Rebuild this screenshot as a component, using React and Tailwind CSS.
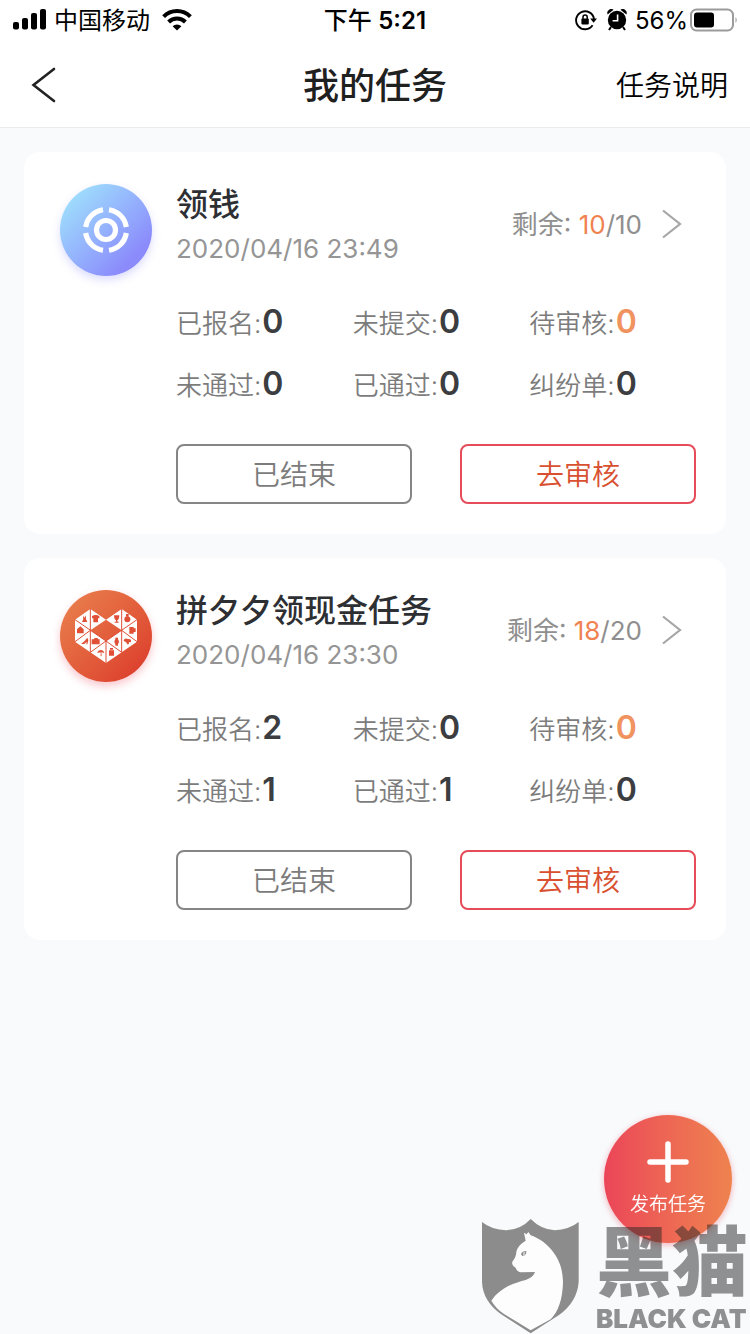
const tasks = [
  {
    id: 1, icon: 'target', title: '领钱', date: '2020/04/16 23:49', left: 10, total: 10,
    stats: [['已报名', 0], ['未提交', 0], ['待审核', 0, true], ['未通过', 0], ['已通过', 0], ['纠纷单', 0]],
  },
  {
    id: 2, icon: 'heart', title: '拼夕夕领现金任务', date: '2020/04/16 23:30', left: 18, total: 20,
    stats: [['已报名', 2], ['未提交', 0], ['待审核', 0, true], ['未通过', 1], ['已通过', 1], ['纠纷单', 0]],
  },
];

function StatusBar() {
  return (
    <div className="grid h-10 grid-cols-[1fr_auto_1fr] items-center px-3 text-[24px] leading-9 text-black">
      <div className="flex items-center gap-2">
        <svg className="h-[22px] w-[34px]" viewBox="0 0 34 22">
          <rect x="1" y="13" width="6" height="7.500" rx="2" />
          <rect x="10" y="9" width="6" height="11.500" rx="2" />
          <rect x="19" y="4" width="6" height="16.500" rx="2" />
          <rect x="28" y="0" width="6" height="20.500" rx="2" />
        </svg>
        <span className="pt-[2px]">中国移动</span>
        <svg className="ml-1 h-[22px] w-[30px]" viewBox="0 0 30 22" fill="none" stroke="#000" strokeWidth="4">
          <path d="M1.600 7.600A19 19 0 0 1 28.400 7.600" />
          <path d="M6.600 13A12 12 0 0 1 23.400 13" />
          <path d="M15 21.500L10.600 17.200A6.400 6.400 0 0 1 19.400 17.200Z" fill="#000" stroke="none" />
        </svg>
      </div>
      <div className="pt-[2px] font-medium">下午 <span className="font-semibold">5:21</span></div>
      <div className="flex items-center justify-end">
        <svg className="mr-[10px] h-[22px] w-[22px]" viewBox="0 0 22 22">
          <path d="M17.600 16.200A9 9 0 1 1 19 10" fill="none" stroke="#000" strokeWidth="1.9" />
          <path d="M15.200 9.400H22L18.600 13.800Z" />
          <rect x="6.400" y="9.600" width="7.400" height="5.800" rx=".8" />
          <path d="M8 10V8.200a2.100 2.100 0 0 1 4.200 0V10" fill="none" stroke="#000" strokeWidth="1.5" />
        </svg>
        <svg className="mr-2 h-[22px] w-[20px]" viewBox="0 0 20 22">
          <circle cx="10" cy="11" r="9.200" />
          <path d="M.6 5.600A4 4 0 0 1 6.600 .8ZM19.400 5.600A4 4 0 0 0 13.400 .8Z" />
          <path d="M4 18L2 21M16 18L18 21" stroke="#000" strokeWidth="2" />
          <path d="M10.600 5.600v6.200H5.600" fill="none" stroke="#fff" strokeWidth="1.6" />
        </svg>
        <span className="mr-[2px] pt-[2px]">56%</span>
        <svg className="h-6 w-12" viewBox="0 0 48 24">
          <rect x="1" y="1.500" width="42" height="21" rx="5.5" fill="none" stroke="#9b9b9b" strokeWidth="2" />
          <rect x="4" y="4.500" width="20" height="15" rx="3" />
          <path d="M45.500 9Q48 12 45.500 15Z" fill="#9b9b9b" />
        </svg>
      </div>
    </div>
  );
}

function TargetIcon() {
  return (
    <svg className="h-[46px] w-[46px]" viewBox="0 0 46 46" fill="none" stroke="#fff" strokeWidth="5.2">
      <circle cx="23" cy="23" r="9.5" />
      <path d="M26 2.700A20.500 20.500 0 0 1 43.300 20M43.300 26A20.500 20.500 0 0 1 26 43.300M20 43.300A20.500 20.500 0 0 1 2.700 26M2.700 20A20.500 20.500 0 0 1 20 2.700" />
    </svg>
  );
}

function HeartIcon() {
  return (
    <svg className="h-[54px] w-[62px]" viewBox="0 0 186 162">
      <path d="M0 32L46 0L93 32L46 64L93 96L140 64L93 32L140 0L186 32V98L93 162L0 98Z" fill="#fff" />
      <path d="M46 0V130M0 32L93 96L186 32M0 98L46 64M186 98L140 64M140 0V130M93 96V162M46 130L93 96L140 130" stroke="#df5036" strokeWidth="3" fill="none" />
      <g fill="#df5036">
        <path d="M24 19l4 7 4-7 1 11 4 9H21l4-9z" />
        <path d="M51 21l8-3h6l8 3v7h-4v12H55V28h-4z" />
        <path d="M117 19h16c0 9-3 14-6 15v4h4v3h-12v-3h4v-4c-3-1-6-6-6-15z" />
        <circle cx="157" cy="31" r="9" /><path d="M153 15h8v8h-8z" />
        <path d="M6 61l10-9 10 9v12H6z" />
        <path d="M163 54h13v20h-13zM176 58h6v11h-6z" />
        <path d="M18 105l10-8 9-11 3 8-3 12h-3l1-8-7 7z" />
        <path d="M50 91h6l3-4h8l3 4h4v15H50z" />
        <circle cx="125" cy="98" r="7" /><path d="M121 86h8v24h-8z" />
        <path d="M146 95c2-8 10-8 13-4 6-3 11 2 9 8l-6 1-1 6h-5l-1-5z" />
        <path d="M67 132c2-12 19-12 21 0l-9-2 1 12-3-1v-11z" />
        <path d="M102 124h15v16h-15zM105 117h9v5h-9z" />
      </g>
    </svg>
  );
}

function TaskCard({ task }) {
  const heart = task.icon === 'heart';
  return (
    <article className="flex items-start gap-6 rounded-2xl bg-white pt-[31px] pr-5 pb-[30px] pl-9">
      <div
        className={
          heart
            ? 'mt-px flex size-[92px] shrink-0 items-center justify-center rounded-full bg-linear-to-br from-[#e9824f] to-[#da3429] shadow-[0_4px_8px_rgba(235,70,90,0.3)]'
            : 'mt-px flex size-[92px] shrink-0 items-center justify-center rounded-full bg-linear-to-br from-[#9fe0fc] from-10% to-[#8b8bfb] to-80% shadow-[0_4px_8px_rgba(139,139,251,0.3)]'
        }
      >
        {heart ? <HeartIcon /> : <TargetIcon />}
      </div>
      <div className="min-w-0 flex-1">
        <div className="flex items-center justify-between pr-6">
          <div>
            <h2 className="text-[32px] leading-[44px] font-medium text-[#2d2f33]">{task.title}</h2>
            <p className="text-[26px] leading-[44px] text-[#959595]">{task.date}</p>
          </div>
          <a href="#detail" className="flex items-center gap-5 pb-[6px] text-[26px] leading-10 text-[#8f8f8f]">
            <span className="pt-px">剩余: <span className="text-[#f0824f]">{task.left}</span>/{task.total}</span>
            <svg className="h-[30px] w-5" viewBox="0 0 20 30" fill="none" stroke="#a6a6a6" strokeWidth="2.2">
              <path d="M1 1.500L18 15L1 28.500" />
            </svg>
          </a>
        </div>
        <dl className="mt-5 grid grid-cols-3">
          {task.stats.map(([label, value, hot]) => (
            <div key={label} className="flex items-baseline gap-px">
              <dt className="text-[26px] leading-10 font-[350] text-[#7c7c7c]">{label}:</dt>
              <dd className={hot ? 'text-[32px] leading-[62px] font-semibold text-[#f0935f]' : 'text-[32px] leading-[62px] font-semibold text-[#3c3d40]'}>{value}</dd>
            </div>
          ))}
        </dl>
        <div className="mt-[29px] grid grid-cols-2 gap-12 pr-[10px]">
          <button type="button" className="h-[60px] rounded-lg border-2 border-[#858585] pt-[2px] text-[28px] font-[350] text-[#7c7c7c]">已结束</button>
          <button type="button" className="h-[60px] rounded-lg border-2 border-[#e64c5a] pt-[2px] text-[28px] font-[350] text-[#d8502f]">去审核</button>
        </div>
      </div>
    </article>
  );
}

function Watermark() {
  return (
    <div className="pointer-events-none fixed right-0 bottom-0 flex items-end gap-4 pr-[2px]">
      <svg className="mr-px h-[116px] w-[98px]" viewBox="31 354 294 348">
        <path d="M34 366Q62 389 107 391Q150 389 180 357Q212 389 252 391Q295 389 324 366V545Q320 605 265 645L180 700L95 645Q36 605 34 545Z" fill="#8c8c8c" />
        <path d="M160 398L168 403L173 396L180 406C235 425 278 480 277 545C276 600 262 635 240 658L180 691L100 642Q75 625 62 602C90 560 135 548 165 540Q187 533 193 516L150 517Q138 514 135 503Q122 495 125 485Q137 470 137 455Q142 435 165 422Z" fill="#fdfdfd" />
        <path d="M151 463Q154 453 167 453Q168 466 155 468Z" fill="#8c8c8c" />
        <path d="M159 456L162 456L161 466L158 466Z" fill="#fdfdfd" />
      </svg>
      <div className="text-[#262626]/50">
        <div className="mb-1 text-[76px] leading-[76px] font-black">黑猫</div>
        <div className="text-[26px] leading-[30px] font-black">BLACK CAT</div>
      </div>
    </div>
  );
}

export default function App() {
  return (
    <div className="min-h-screen bg-slate-50 font-[Inter,'Noto_Sans_CJK_SC',sans-serif]">
      <header className="border-b border-[#ececec] bg-white">
        <StatusBar />
        <div className="grid h-[87px] grid-cols-[1fr_auto_1fr] items-center px-[22px] pt-[3px]">
          <button type="button" aria-label="返回" className="justify-self-start pl-2">
            <svg className="h-9 w-7" viewBox="0 0 28 36" fill="none" stroke="#222" strokeWidth="2.6" strokeLinecap="round">
              <path d="M24 2L3.500 18L24 34" />
            </svg>
          </button>
          <h1 className="pt-[2px] text-[36px] leading-[48px] font-medium text-[#1f2020]">我的任务</h1>
          <a href="#help" className="justify-self-end pt-[2px] text-[28px] leading-[48px] font-[350] text-black">任务说明</a>
        </div>
      </header>
      <main className="flex flex-col gap-6 p-6">
        {tasks.map((t) => <TaskCard key={t.id} task={t} />)}
      </main>
      <button
        type="button"
        className="fixed right-[18px] bottom-[91px] flex size-32 flex-col items-center justify-center gap-2 rounded-full bg-linear-to-r from-[#eb4558] to-[#ee824e] pt-[2px] text-[19px] leading-7 font-[350] text-white shadow-[0_2px_6px_rgba(235,69,88,0.4)]"
      >
        <svg className="size-[42px]" viewBox="0 0 42 42" stroke="#fff" strokeWidth="5.5" strokeLinecap="round">
          <path d="M21 3V39M3 21H39" />
        </svg>
        发布任务
      </button>
      <Watermark />
    </div>
  );
}
